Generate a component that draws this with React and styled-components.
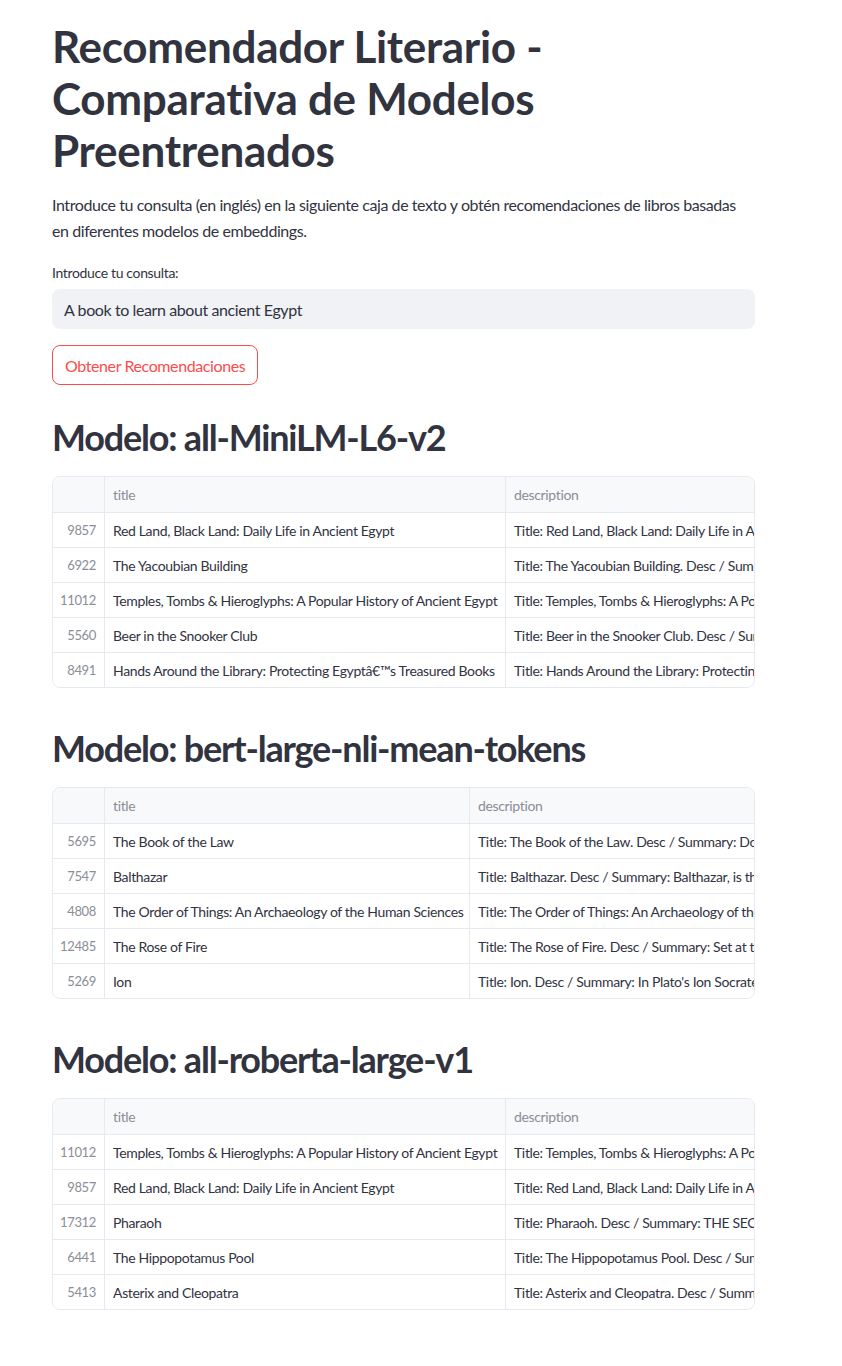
import React from 'react';
import styled, { createGlobalStyle } from 'styled-components';

const GlobalStyle = createGlobalStyle`
  html, body {
    margin: 0;
    padding: 0;
    background: #ffffff;
  }
  body {
    font-family: Lato, "Noto Sans", sans-serif;
    color: #31333f;
  }
`;

const Page = styled.main`
  width: 703px;
  padding: 20px 0 40px 52px;
  display: flex;
  flex-direction: column;
`;

const Title = styled.h1`
  margin: 0;
  font-size: 44px;
  line-height: 52px;
  font-weight: 700;
  letter-spacing: -0.3px;
`;

const Intro = styled.p`
  margin: 16px 0 0;
  font-size: 16px;
  line-height: 26px;
  letter-spacing: -0.42px;
`;

const Label = styled.label`
  margin-top: 19px;
  font-size: 14px;
  line-height: 20px;
  letter-spacing: -0.35px;
`;

const InputBox = styled.div`
  margin-top: 6px;
  height: 40px;
  border-radius: 8px;
  background: #f0f2f6;
  display: flex;
  align-items: center;
  padding: 0 12px;
  font-size: 16px;
  letter-spacing: -0.4px;
`;

const Button = styled.button`
  align-self: flex-start;
  margin-top: 16px;
  height: 40px;
  padding: 0 12px;
  border: 1px solid #ff4b4b;
  border-radius: 8px;
  background: #ffffff;
  color: #ff4b4b;
  font-family: inherit;
  font-size: 16px;
  letter-spacing: -0.4px;
`;

const Section = styled.section`
  display: flex;
  flex-direction: column;
  margin-top: ${p => p.first ? '30px' : '38px'};
`;

const Subtitle = styled.h2`
  margin: 0;
  font-size: 36px;
  line-height: 44px;
  font-weight: 700;
  letter-spacing: -1.2px;
`;

const Table = styled.div`
  margin-top: 17px;
  border: 1px solid #e6e9ef;
  border-radius: 8px;
  overflow: hidden;
  font-size: 14px;
  letter-spacing: -0.35px;
`;

const Row = styled.div`
  display: grid;
  grid-template-columns: ${p => p.cols};
  height: 35px;
  background: ${p => p.head ? '#f8f9fb' : '#ffffff'};
  border-top: ${p => p.head ? 'none' : '1px solid #e6e9ef'};
  box-sizing: border-box;
`;

const Cell = styled.div`
  display: flex;
  align-items: center;
  padding: 0 8px;
  white-space: nowrap;
  overflow: hidden;
  border-left: ${p => p.first ? 'none' : '1px solid #e6e9ef'};
  color: ${p => p.muted ? '#8b8d98' : '#31333f'};
  justify-content: ${p => p.right ? 'flex-end' : 'flex-start'};
  font-size: ${p => p.right ? '13px' : '14px'};
`;

const sections = [
  {
    model: 'all-MiniLM-L6-v2',
    title: 401,
    rows: [
      ['9857', 'Red Land, Black Land: Daily Life in Ancient Egypt', 'Title: Red Land, Black Land: Daily Life in Ancient Egypt. Desc / Summary'],
      ['6922', 'The Yacoubian Building', 'Title: The Yacoubian Building. Desc / Summary: This novel'],
      ['11012', 'Temples, Tombs & Hieroglyphs: A Popular History of Ancient Egypt', 'Title: Temples, Tombs & Hieroglyphs: A Popular History'],
      ['5560', 'Beer in the Snooker Club', 'Title: Beer in the Snooker Club. Desc / Summary: A novel'],
      ['8491', 'Hands Around the Library: Protecting Egyptâ€™s Treasured Books', 'Title: Hands Around the Library: Protecting Egypt'],
    ],
  },
  {
    model: 'bert-large-nli-mean-tokens',
    title: 365,
    rows: [
      ['5695', 'The Book of the Law', 'Title: The Book of the Law. Desc / Summary: Do what thou wilt'],
      ['7547', 'Balthazar', 'Title: Balthazar. Desc / Summary: Balthazar, is the second'],
      ['4808', 'The Order of Things: An Archaeology of the Human Sciences', 'Title: The Order of Things: An Archaeology of the Human'],
      ['12485', 'The Rose of Fire', 'Title: The Rose of Fire. Desc / Summary: Set at the'],
      ['5269', 'Ion', "Title: Ion. Desc / Summary: In Plato's Ion Socrates"],
    ],
  },
  {
    model: 'all-roberta-large-v1',
    title: 401,
    rows: [
      ['11012', 'Temples, Tombs & Hieroglyphs: A Popular History of Ancient Egypt', 'Title: Temples, Tombs & Hieroglyphs: A Popular History'],
      ['9857', 'Red Land, Black Land: Daily Life in Ancient Egypt', 'Title: Red Land, Black Land: Daily Life in Ancient Egypt'],
      ['17312', 'Pharaoh', 'Title: Pharaoh. Desc / Summary: THE SECRET'],
      ['6441', 'The Hippopotamus Pool', 'Title: The Hippopotamus Pool. Desc / Summary'],
      ['5413', 'Asterix and Cleopatra', 'Title: Asterix and Cleopatra. Desc / Summary'],
    ],
  },
];

function ResultTable({ data }) {
  const cols = `51px ${data.title}px 1fr`;
  return (
    <Table>
      <Row head cols={cols}>
        <Cell first />
        <Cell muted>title</Cell>
        <Cell muted>description</Cell>
      </Row>
      {data.rows.map(([idx, title, desc]) => (
        <Row key={idx} cols={cols}>
          <Cell first muted right>{idx}</Cell>
          <Cell>{title}</Cell>
          <Cell>{desc}</Cell>
        </Row>
      ))}
    </Table>
  );
}

export default function App() {
  return (
    <>
      <GlobalStyle />
      <Page>
        <Title>Recomendador Literario - Comparativa de Modelos Preentrenados</Title>
        <Intro>
          Introduce tu consulta (en inglés) en la siguiente caja de texto y obtén recomendaciones de libros basadas en diferentes modelos de embeddings.
        </Intro>
        <Label>Introduce tu consulta:</Label>
        <InputBox>A book to learn about ancient Egypt</InputBox>
        <Button>Obtener Recomendaciones</Button>
        {sections.map((s, i) => (
          <Section key={s.model} first={i === 0}>
            <Subtitle>Modelo: {s.model}</Subtitle>
            <ResultTable data={s} />
          </Section>
        ))}
      </Page>
    </>
  );
}
